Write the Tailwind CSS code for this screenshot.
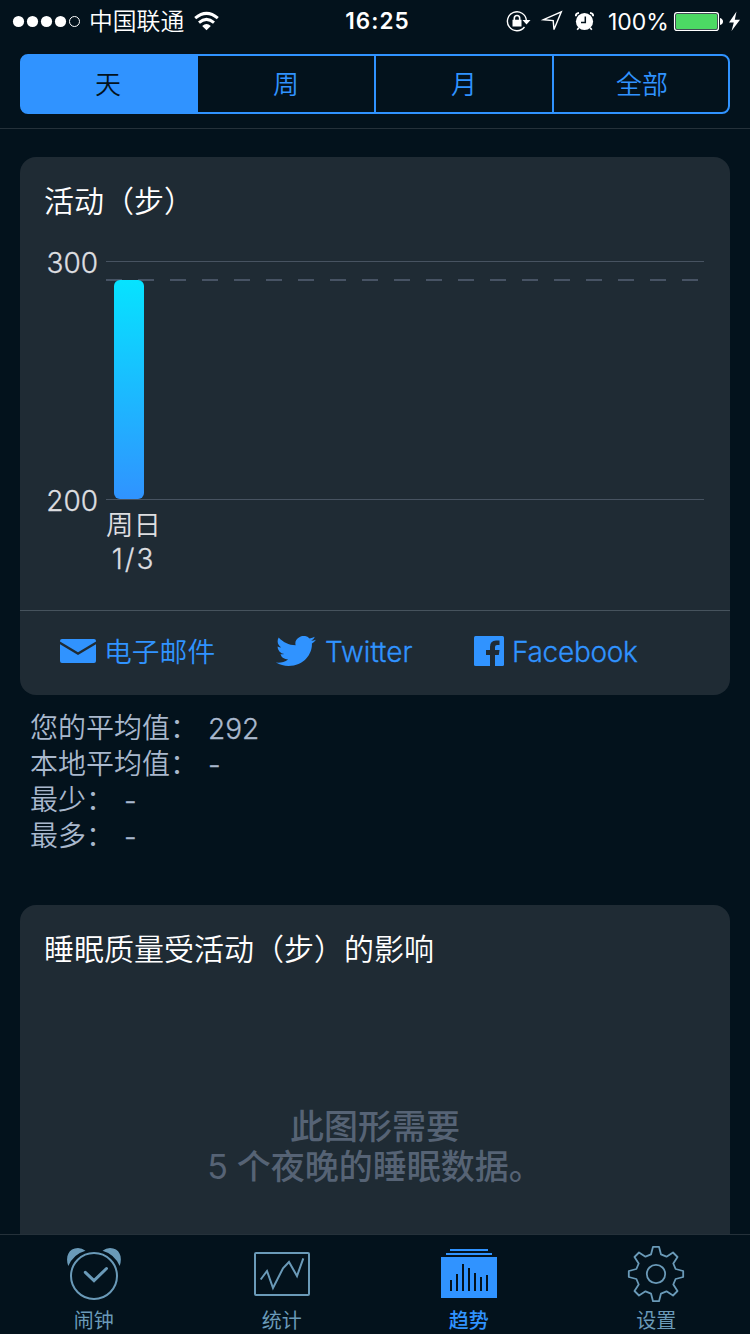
<!DOCTYPE html>
<html lang="zh-CN">
<head>
<meta charset="utf-8">
<title>趋势</title>
<script src="https://cdn.jsdelivr.net/npm/@tailwindcss/browser@4"></script>
</head>
<body class="flex h-[1334px] w-[750px] flex-col overflow-hidden bg-[#03121c] font-['Inter','Noto_Sans_CJK_SC',sans-serif] whitespace-nowrap text-white">
  <!-- status bar -->
  <header class="grid h-10 shrink-0 grid-cols-[344px_67px_1fr] items-center">
    <div class="flex h-10 items-start">
      <svg class="ml-3 h-10 w-[77px]" viewBox="12 0 77 40" fill="#fff"><circle cx="18.5" cy="20.5" r="5.6"/><circle cx="32.5" cy="20.5" r="5.6"/><circle cx="46.5" cy="20.5" r="5.6"/><circle cx="60.5" cy="20.5" r="5.6"/><circle cx="74.5" cy="20.5" r="5" fill="none" stroke="#fff"/></svg>
      <span class="w-24 text-[23.800px] leading-[38px] font-[350] font-['Noto_Sans_CJK_SC',sans-serif]">中国联通</span>
      <svg class="ml-2 h-10 w-7" viewBox="193 0 28 40" fill="none" stroke="#fff" stroke-width="3"><path d="M195.2 17.2Q206.500 7.600 217.800 17.200"/><path d="M199 21.600Q206.500 15.200 214 21.600"/><path d="M202.200 25Q206.500 21 210.800 25L206.500 29.200Z" fill="#fff" stroke="none"/></svg>
    </div>
    <div class="pt-px text-center text-[22.500px] leading-10 font-semibold tracking-[1.100px]">16:25</div>
    <div class="flex h-10 items-start">
      <svg class="ml-[94px] h-10 w-[97px]" viewBox="505 0 97 40">
        <g fill="none" stroke="#fff" stroke-width="1.400"><path d="M524.500 26A9.500 9.500 0 1 1 526.400 19.500"/><path d="M514.300 19.500v-2.300a2.700 2.700 0 0 1 5.400 0v2.300" stroke-width="1.600"/></g>
        <path d="M512.500 18.800h9v6.700h-9zM522.500 19h8l-4 4.500z" fill="#fff"/>
        <path d="M543.500 18.700L561.300 10.800L554 28.600L553.200 19.600Z" fill="none" stroke="#fff" stroke-width="1.400"/>
        <circle cx="584.500" cy="20.500" r="8.600" fill="#fff"/>
        <path d="M585.300 15.500V21.500H581" fill="none" stroke="#03121c" stroke-width="1.500"/>
        <path d="M575.800 15.200Q575.600 12.200 579 11.800M593.200 15.200Q593.400 12.200 590 11.800M578.800 26.800l-1.600 2M590.200 26.800l1.600 2" fill="none" stroke="#fff" stroke-width="1.700"/>
      </svg>
      <span class="ml-[6px] w-[60px] pt-px text-[23px] leading-10">100%</span>
      <svg class="ml-[4px] h-10 w-[70px]" viewBox="672 0 70 40"><rect x="674.600" y="11.600" width="43.800" height="17.800" rx="2.500" fill="none" stroke="#fff" stroke-width="1.300"/><rect x="676" y="13" width="41" height="15" rx="1" fill="#4cd964"/><path d="M720 17q3 1 3 3.500t-3 3.500z" fill="#fff"/><path d="M736.500 10.500L729 21.500H733.800L731.500 30L740 18.700H734.800Z" fill="#fff"/></svg>
    </div>
  </header>

  <!-- period selector -->
  <div class="h-[89px] shrink-0 border-b border-[#25313a] px-5 pt-[14px]">
    <div class="grid h-[60px] grid-cols-[176px_178px_178px_1fr] overflow-hidden rounded-lg border-2 border-[#3093ff] bg-[linear-gradient(90deg,#3093ff_176px,#03121c_176px)] text-center text-[26px] leading-[58px] font-[350] text-[#3093ff]">
      <div class="bg-[#3093ff] pr-1 text-[#03121c]">天</div>
      <div class="border-r-2 border-[#3093ff]">周</div>
      <div class="border-r-2 border-[#3093ff]">月</div>
      <div class="pl-0.5">全部</div>
    </div>
  </div>

  <main class="flex min-h-0 flex-1 flex-col overflow-hidden px-5 pt-7">
    <!-- activity chart -->
    <section class="flex h-[538px] shrink-0 flex-col rounded-2xl bg-[#1f2b34]">
      <h2 class="h-[84px] pt-[20px] pl-[24px] font-['Noto_Sans_CJK_SC',sans-serif] text-[30px] leading-[44px] font-[350]">活动（步）</h2>
      <div class="flex h-[370px] border-b border-[#46535d] font-[350] text-[#dddee0]">
        <div class="flex w-[86px] flex-col items-end pt-[2px] pr-[8px] text-[28px] leading-10 [-webkit-text-stroke:0.3px]">
          <span>300</span>
          <span class="mt-[198px]">200</span>
        </div>
        <div>
          <svg class="h-[262px] w-[600px]" viewBox="106 241 600 262">
            <defs><linearGradient id="bar" x1="0" y1="0" x2="0" y2="1"><stop offset="0" stop-color="#06e3ff"/><stop offset="1" stop-color="#3093ff"/></linearGradient></defs>
            <path d="M106 261.500H704M106 499.500H704" stroke="#475361"/>
            <path d="M106 280H704" stroke="#475364" stroke-width="2" stroke-dasharray="16 16"/>
            <rect x="114" y="280" width="30" height="219" rx="6" fill="url(#bar)"/>
          </svg>
          <div class="w-[55px] pt-[6px] text-center text-[27.500px] leading-[33px]"><div>周日</div><div class="pt-px text-[28px] tracking-[2px] [-webkit-text-stroke:0.3px]">1/3</div></div>
        </div>
      </div>
      <div class="flex flex-1 items-start pt-[20px] text-[28px] leading-10 font-[350] text-[#3093ff]">
        <div class="ml-10 flex w-[216px] items-center">
          <svg class="h-6 w-9" viewBox="0 0 36 24" fill="#3093ff"><path d="M2 0H34Q36 0 36 2V2.500L18 13.300L0 2.500V2Q0 0 2 0Z"/><path d="M0 5.200L18 16L36 5.200V22Q36 24 34 24H2Q0 24 0 22Z"/></svg>
          <span class="ml-[8px] pt-0.5 text-[27.800px] leading-[38px]">电子邮件</span>
        </div>
        <div class="flex w-[198px] items-center">
          <svg class="h-[30px] w-[40px]" viewBox="0 2.200 24 19.600" preserveAspectRatio="none" fill="#3093ff"><path d="M23.953 4.570a10 10 0 0 1-2.825.775 4.958 4.958 0 0 0 2.163-2.723c-.951.555-2.005.959-3.127 1.184a4.920 4.920 0 0 0-8.384 4.482C7.690 8.095 4.067 6.130 1.640 3.162a4.822 4.822 0 0 0-.666 2.475c0 1.710.87 3.213 2.188 4.096a4.904 4.904 0 0 1-2.228-.616v.06a4.923 4.923 0 0 0 3.946 4.827 4.996 4.996 0 0 1-2.212.085 4.936 4.936 0 0 0 4.604 3.417 9.867 9.867 0 0 1-6.102 2.105c-.39 0-.779-.023-1.170-.067a13.995 13.995 0 0 0 7.557 2.209c9.053 0 13.998-7.496 13.998-13.985 0-.21 0-.42-.015-.63A9.935 9.935 0 0 0 24 4.590z"/></svg>
          <span class="ml-[9px] pt-0.5 leading-[38px] [-webkit-text-stroke:0.3px]">Twitter</span>
        </div>
        <div class="flex items-center">
          <svg class="h-[30px] w-[30px]" viewBox="0 0 30 30"><rect width="30" height="30" rx="1.500" fill="#3093ff"/><path d="M16 30V19H12V14H16V11Q16 4.500 22 4.500H25.500V9H23Q21 9 21 11V14H25.500L24.800 19H21V30Z" fill="#1f2b34"/></svg>
          <span class="ml-[8px] pt-0.5 leading-[38px] tracking-[-0.300px] [-webkit-text-stroke:0.3px]">Facebook</span>
        </div>
      </div>
    </section>

    <!-- averages -->
    <div class="h-[210px] shrink-0 pt-[13px] pl-[10px] text-[28px] leading-9 font-[350] text-[#a9b8cd]">
      <div class="flex h-9"><span class="w-[178px] font-['Noto_Sans_CJK_SC',sans-serif]">您的平均值：</span><span class="pt-[3px] [-webkit-text-stroke:0.3px]">292</span></div>
      <div class="flex h-9"><span class="w-[178px] font-['Noto_Sans_CJK_SC',sans-serif]">本地平均值：</span><span class="pt-[3px] [-webkit-text-stroke:0.3px]">-</span></div>
      <div class="flex h-9"><span class="w-[94px] font-['Noto_Sans_CJK_SC',sans-serif]">最少：</span><span class="pt-[3px] [-webkit-text-stroke:0.3px]">-</span></div>
      <div class="flex h-9"><span class="w-[94px] font-['Noto_Sans_CJK_SC',sans-serif]">最多：</span><span class="pt-[3px] [-webkit-text-stroke:0.3px]">-</span></div>
    </div>

    <!-- sleep quality -->
    <section class="h-[360px] shrink-0 rounded-t-2xl bg-[#1f2b34]">
      <h2 class="h-[202px] pt-[20px] pl-[24px] font-['Noto_Sans_CJK_SC',sans-serif] text-[30px] leading-[44px] font-[350]">睡眠质量受活动（步）的影响</h2>
      <p class="text-center text-[34px] leading-[39.500px] font-medium text-[#566375]">此图形需要<br><span class="font-normal">5</span> 个夜晚的睡眠数据。</p>
    </section>
  </main>

  <!-- tab bar -->
  <nav class="grid h-[100px] shrink-0 grid-cols-4 border-t border-[#25313a] text-[20px] leading-7 text-[#6a9ab8]">
    <div class="flex flex-col items-center pt-[9px]">
      <svg class="h-[60px] w-[60px]" viewBox="64 1244 60 60" fill="none" stroke="#6a9ab8" stroke-width="2"><circle cx="94" cy="1276" r="23"/><path d="M85.300 1272.300L94 1280.600L106.500 1268.500" stroke-width="3" stroke-linecap="round"/><path d="M68.300 1266C65 1257 68.500 1248 78 1248Q82 1248 85.500 1250.700Q73.500 1254 68.300 1266ZM119.700 1266C123 1257 119.500 1248 110 1248Q106 1248 102.500 1250.700Q114.500 1254 119.700 1266Z" fill="#6a9ab8" stroke="none"/></svg>
      <span class="mt-[3px]">闹钟</span>
    </div>
    <div class="flex flex-col items-center pt-[9px] pl-px">
      <svg class="h-[60px] w-[60px]" viewBox="252 1244 60 60" fill="none" stroke="#6a9ab8" stroke-width="2"><rect x="255" y="1253" width="54" height="42" rx="1"/><path d="M260.700 1279.500L267 1271L273 1288L283 1268.300L289 1262L297 1276L303.300 1258.300"/></svg>
      <span class="mt-[3px]">统计</span>
    </div>
    <div class="flex flex-col items-center pt-[9px] text-[#3093ff]">
      <svg class="h-[60px] w-[60px]" viewBox="439 1244 60 60" fill="#3093ff"><path d="M450 1249h38v2h-38zM446 1253h46v2h-46zM441 1257h56v41h-56z"/><path d="M450 1280h2v11h-2zM456 1274h2v17h-2zM462 1264h2v27h-2zM468 1268h2v23h-2zM474 1273h2v18h-2zM480 1277h2v14h-2zM486 1275h2v16h-2z" fill="#03121c"/></svg>
      <span class="mt-[3px] font-medium">趋势</span>
    </div>
    <div class="flex flex-col items-center pt-[9px]">
      <svg class="h-[60px] w-[60px]" viewBox="-30 -30 60 60" fill="none" stroke="#6a9ab8" stroke-width="1.800" stroke-linejoin="round"><circle r="9.200"/><path d="M-3-27.200L3-27.200L5-19.600L10.500-17.300L17-21.500L21.500-17L17.300-10.500L19.600-5L27.200-3L27.200 3L19.600 5L17.300 10.500L21.500 17L17 21.500L10.500 17.300L5 19.600L3 27.200L-3 27.200L-5 19.600L-10.500 17.300L-17 21.500L-21.500 17L-17.300 10.500L-19.600 5L-27.200 3L-27.200-3L-19.600-5L-17.300-10.500L-21.500-17L-17-21.500L-10.500-17.300L-5-19.600Z"/></svg>
      <span class="mt-[3px]">设置</span>
    </div>
  </nav>
</body>
</html>
